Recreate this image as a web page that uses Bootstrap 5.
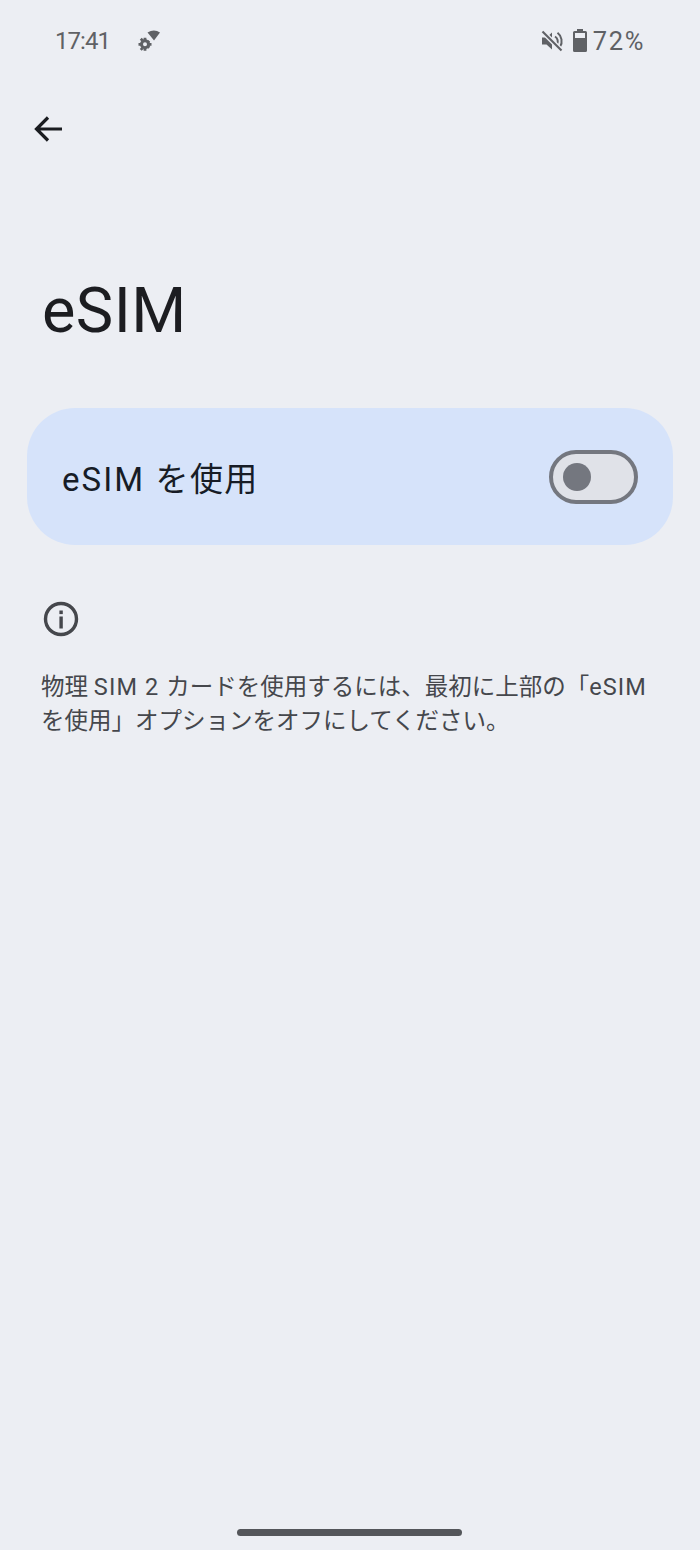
<!DOCTYPE html>
<html lang="ja">
<head>
  <meta charset="UTF-8" />
  <meta name="viewport" content="width=device-width, initial-scale=1" />
  <title>eSIM</title>
  <link href="https://cdn.jsdelivr.net/npm/bootstrap@5.3.2/dist/css/bootstrap.min.css" rel="stylesheet">
  <style>
    html, body { height: 100%; }
    body {
      background-color: #eceef3;
      font-family: Roboto, "Noto Sans CJK JP", sans-serif;
      overflow: hidden;
    }
    .screen { height: 1550px; }
    .status-bar { height: 82px; padding: 0 56px 0 55px; color: #5f6165; }
    .status-time { font-size: 24px; width: 83px; letter-spacing: -.95px; }
    .status-pct { font-size: 25.5px; letter-spacing: 1.6px; margin-left: 6px; margin-right: -1px; }
    .batt-gap { margin-left: 9px; }
    .back-row { height: 94px; padding-left: 31px; }
    .page-title { font-size: 63px; font-weight: 400; line-height: 74px; color: #1c1d21; margin: 98px 0 0 42px; letter-spacing: .45px; }
    .esim-card {
      height: 137px;
      margin: 60px 27px 0;
      padding: 0 35px;
      background-color: #d6e3fa;
      border-radius: 48px;
    }
    .esim-label { font-size: 33px; color: #171c26; letter-spacing: 1.3px; padding-top: 6px; }
    .label-latin { letter-spacing: 2.1px; }
    .toggle-track {
      width: 89px;
      height: 54px;
      border: 4px solid #74777f;
      border-radius: 27px;
      background-color: #e0e2e8;
      padding-left: 10px;
    }
    .toggle-thumb { width: 28px; height: 28px; border-radius: 50%; background-color: #74777f; }
    .info-block { padding: 0 41px; margin-top: 55px; color: #45474c; }
    .info-text { font-size: 23.5px; line-height: 34px; margin-top: 32px; white-space: nowrap; }
    .info-latin { letter-spacing: 1.1px; }
    .home-bar { height: 7px; width: 225px; border-radius: 4px; background-color: #54565a; margin-left: 237px; }
    .home-wrap { padding-bottom: 14px; }
  </style>
</head>
<body>
<div class="screen d-flex flex-column">
  <!-- status bar -->
  <div class="status-bar d-flex align-items-center justify-content-between">
    <div class="d-flex align-items-center">
      <span class="status-time">17:41</span>
      <svg width="24" height="24" viewBox="0 0 24 24" fill="#5f6165">
        <path d="M9.500 3.500 Q16 -0.500 22 3.500 L16 11.500 Z"/>
        <g transform="translate(-2 0.300)">
          <circle cx="9" cy="15" r="3.500" fill="none" stroke="#5f6165" stroke-width="3"/>
          <path d="M7.600 8.500h2.800v2.500H7.600zM7.600 19h2.800v2.500H7.600zM2.500 13.600H5v2.800H2.500zM13 13.600h2.500v2.800H13zM3.800 10.400l1.900-1.900 1.800 1.800-1.900 1.900zM10.500 17.600l1.900-1.900 1.800 1.800-1.900 1.900zM3.800 19.600l1.900 1.900 1.800-1.800-1.900-1.900zM10.500 12.400l1.900 1.900 1.800-1.800-1.900-1.900z"/>
        </g>
      </svg>
    </div>
    <div class="d-flex align-items-center">
      <svg width="24" height="24" viewBox="0 0 24 24">
        <path d="M2 8.500h4.500L12 3.500v17l-5.500-5H2z" fill="#5f6165"/>
        <path d="M15 7.500a6 6 0 0 1 2 8M17.500 3.800a10.500 10.500 0 0 1 2.500 14" fill="none" stroke="#5f6165" stroke-width="2"/>
        <path d="M2.500 2.500l19 19" stroke="#eceef3" stroke-width="5"/>
        <path d="M2.500 2.500l19 19" stroke="#5f6165" stroke-width="2.200"/>
      </svg>
      <svg width="14" height="24" viewBox="0 0 14 24" class="batt-gap">
        <path d="M4 0h6v2h2.500A1.500 1.500 0 0 1 14 3.500v18a1.500 1.500 0 0 1-1.500 1.500h-11A1.500 1.500 0 0 1 0 21.500v-18A1.500 1.500 0 0 1 1.500 2H4z" fill="#5f6165"/>
        <rect x="2" y="4" width="10" height="5" fill="#eceef3"/>
      </svg>
      <span class="status-pct">72%</span>
    </div>
  </div>

  <!-- back -->
  <div class="back-row d-flex align-items-center">
    <svg width="34" height="34" viewBox="0 0 34 34" fill="none" stroke="#1a1c20" stroke-width="3.200">
      <path d="M31 17H6M17 5.500 5.500 17 17 28.500"/>
    </svg>
  </div>

  <h1 class="page-title">eSIM</h1>

  <div class="esim-card d-flex align-items-center justify-content-between">
    <span class="esim-label"><span class="label-latin">eSIM </span>を使用</span>
    <div class="toggle-track d-flex align-items-center">
      <div class="toggle-thumb"></div>
    </div>
  </div>

  <div class="info-block">
    <svg width="38" height="38" viewBox="0 0 38 38" class="d-block" fill="none">
      <circle cx="20" cy="19" r="15.500" stroke="#45474c" stroke-width="3.400"/>
      <rect x="18.400" y="16.500" width="3.400" height="12" fill="#45474c"/>
      <rect x="18.400" y="10.500" width="3.400" height="3.600" fill="#45474c"/>
    </svg>
    <div class="info-text">物理 <span class="info-latin">SIM 2 </span>カードを使用するには、最初に上部の「<span class="info-latin">eSIM</span><br>を使用」オプションをオフにしてください。</div>
  </div>

  <div class="mt-auto home-wrap">
    <div class="home-bar"></div>
  </div>
</div>
<script src="https://cdn.jsdelivr.net/npm/bootstrap@5.3.2/dist/js/bootstrap.bundle.min.js"></script>
</body>
</html>
